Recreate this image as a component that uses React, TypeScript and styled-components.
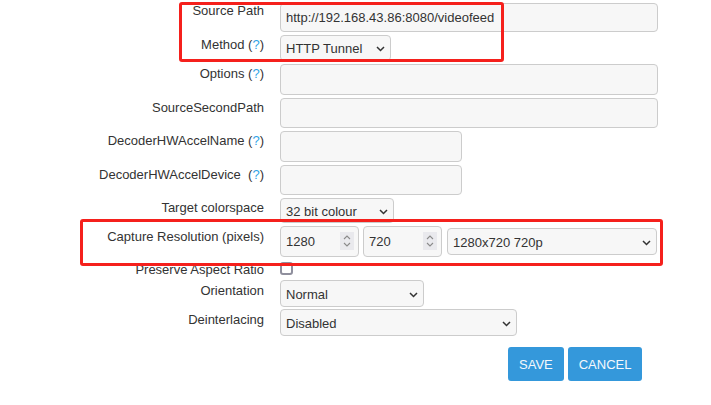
import React from "react";
import styled, { createGlobalStyle } from "styled-components";

const Global = createGlobalStyle`
  html, body { margin: 0; padding: 0; background: #ffffff; }
  body { font-family: "Liberation Sans", Arial, sans-serif; font-size: 13px; color: #333333; }
  * { box-sizing: border-box; }
`;

const Page = styled.div`
  position: relative;
  width: 711px;
  height: 405px;
  padding-top: 3px;
  overflow: hidden;
`;

const Form = styled.div`
  display: grid;
  grid-template-columns: 264px 1fr;
  column-gap: 16px;
  row-gap: 3px;
  align-items: start;
`;

const Label = styled.div<{ $pt?: number }>`
  text-align: right;
  font-size: 13px;
  line-height: 15px;
  padding-top: ${(p) => (p.$pt === undefined ? 2 : p.$pt)}px;
  color: #333333;
  white-space: pre;
`;

const Help = styled.span`
  color: #2fa4e7;
`;

const Field = styled.div<{ $tight?: boolean }>`
  display: flex;
  align-items: center;
  gap: 4px;
  margin-top: ${(p) => (p.$tight ? "-1px" : "0")};
`;

const controlBase = `
  font-family: "Liberation Sans", Arial, sans-serif;
  font-size: 13px;
  color: #333333;
  background: #f7f7f7;
  border: 1px solid #cccccc;
  border-radius: 4px;
  outline: none;
  margin: 0;
`;

const TextInput = styled.input<{ $w: number; $h: number }>`
  ${controlBase}
  width: ${(p) => p.$w}px;
  height: ${(p) => p.$h}px;
  padding: 0 5px;
`;

const SelectWrap = styled.span<{ $w: number; $h: number; $ml?: number }>`
  position: relative;
  display: inline-block;
  width: ${(p) => p.$w}px;
  height: ${(p) => p.$h}px;
  margin-left: ${(p) => p.$ml || 0}px;
`;

const NativeSelect = styled.select`
  ${controlBase}
  appearance: none;
  -webkit-appearance: none;
  width: 100%;
  height: 100%;
  padding: 1px 22px 0 5px;
`;

const Chevron = styled.svg`
  position: absolute;
  right: 6px;
  top: 50%;
  margin-top: -2px;
  width: 9px;
  height: 6px;
  pointer-events: none;
`;

const NumberWrap = styled.span`
  position: relative;
  display: inline-block;
  width: 79px;
  height: 31px;
`;

const NumberInput = styled.input`
  ${controlBase}
  width: 100%;
  height: 100%;
  padding: 0 22px 0 5px;
`;

const Spinner = styled.span`
  position: absolute;
  right: 5px;
  top: 6px;
  width: 14px;
  height: 18px;
  background: #e9e9ed;
  display: flex;
  align-items: center;
  justify-content: center;
  pointer-events: none;
`;

const Check = styled.input`
  appearance: none;
  -webkit-appearance: none;
  width: 13px;
  height: 13px;
  margin: 2px 0 1px 0;
  border: 2px solid #8f8f9d;
  border-radius: 3px;
  background: #ffffff;
`;

const Buttons = styled.div`
  grid-column: 2;
  display: flex;
  gap: 4px;
  padding-left: 228px;
  margin-top: 8px;
`;

const Button = styled.button`
  font-family: "Liberation Sans", Arial, sans-serif;
  font-size: 13px;
  height: 34px;
  padding: 0 11px;
  border: none;
  border-radius: 3px;
  background: #3498db;
  color: #f4f8fb;
`;

const Highlight = styled.div<{ $x: number; $y: number; $w: number; $h: number }>`
  position: absolute;
  left: ${(p) => p.$x}px;
  top: ${(p) => p.$y}px;
  width: ${(p) => p.$w}px;
  height: ${(p) => p.$h}px;
  border: 3px solid #f5201c;
  border-radius: 3px;
  pointer-events: none;
`;

function Select({ w, h, value, ml }: { w: number; h: number; value: string; ml?: number }) {
  return (
    <SelectWrap $w={w} $h={h} $ml={ml}>
      <NativeSelect defaultValue={value}>
        <option>{value}</option>
      </NativeSelect>
      <Chevron viewBox="0 0 9 6">
        <path d="M1 1 L4.5 4.5 L8 1" fill="none" stroke="#333" strokeWidth="1.5" />
      </Chevron>
    </SelectWrap>
  );
}

function NumberField({ value }: { value: string }) {
  return (
    <NumberWrap>
      <NumberInput defaultValue={value} />
      <Spinner>
        <svg width="8" height="14" viewBox="0 0 8 14">
          <path d="M1 5 L4 2 L7 5" fill="none" stroke="#8a8a8a" strokeWidth="1.1" />
          <path d="M1 9 L4 12 L7 9" fill="none" stroke="#8a8a8a" strokeWidth="1.1" />
        </svg>
      </Spinner>
    </NumberWrap>
  );
}

function HelpLabel({ text }: { text: string }) {
  return (
    <Label>
      {text}(<Help>?</Help>)
    </Label>
  );
}

export default function App() {
  return (
    <Page>
      <Global />
      <Form>
        <Label $pt={0}>Source Path</Label>
        <Field>
          <TextInput $w={378} $h={29} defaultValue="http://192.168.43.86:8080/videofeed" />
        </Field>

        <HelpLabel text="Method " />
        <Field>
          <Select w={111} h={26} value="HTTP Tunnel" />
        </Field>

        <HelpLabel text="Options " />
        <Field>
          <TextInput $w={378} $h={31} />
        </Field>

        <Label>SourceSecondPath</Label>
        <Field>
          <TextInput $w={378} $h={30} />
        </Field>

        <HelpLabel text="DecoderHWAccelName " />
        <Field>
          <TextInput $w={182} $h={31} />
        </Field>

        <HelpLabel text="DecoderHWAccelDevice  " />
        <Field>
          <TextInput $w={182} $h={30} />
        </Field>

        <Label>Target colorspace</Label>
        <Field>
          <Select w={114} h={25} value="32 bit colour" />
        </Field>

        <Label $pt={3}>Capture Resolution (pixels)</Label>
        <Field>
          <NumberField value="1280" />
          <NumberField value="720" />
          <Select w={210} h={27} value="1280x720 720p" ml={1} />
        </Field>

        <Label>Preserve Aspect Ratio</Label>
        <Field>
          <Check type="checkbox" />
        </Field>

        <Label $pt={3}>Orientation</Label>
        <Field>
          <Select w={144} h={27} value="Normal" />
        </Field>

        <Label>Deinterlacing</Label>
        <Field $tight>
          <Select w={237} h={27} value="Disabled" />
        </Field>

        <Buttons>
          <Button>SAVE</Button>
          <Button>CANCEL</Button>
        </Buttons>
      </Form>

      <Highlight $x={179} $y={2} $w={325} $h={60} />
      <Highlight $x={80} $y={219} $w={583} $h={47} />
    </Page>
  );
}
